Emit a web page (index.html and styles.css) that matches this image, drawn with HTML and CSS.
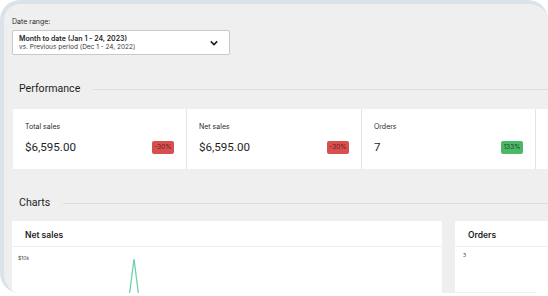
FILE: index.html
```html
<!DOCTYPE html>
<html>
<head>
<meta charset="utf-8">
<title>Analytics overview</title>
<link rel="stylesheet" href="styles.css">
</head>
<body>
<div class="frame">
	<div class="filters">
		<div class="filter-label">Date range:</div>
		<div class="select">
			<div class="select-text">
				<div class="select-title">Month to date (Jan 1 - 24, 2023)</div>
				<div class="select-sub">vs. Previous period (Dec 1 - 24, 2022)</div>
			</div>
			<svg class="chevron" width="10" height="10" viewBox="0 0 10 10"><path d="M1.8 3.4 L5 6.6 L8.2 3.4" fill="none" stroke="#1e1e1e" stroke-width="1.5"/></svg>
		</div>
	</div>

	<div class="section-title">
		<span>Performance</span>
		<div class="rule"></div>
	</div>

	<div class="stats">
		<div class="stat">
			<div class="stat-label">Total sales</div>
			<div class="stat-row">
				<span class="stat-value">$6,595.00</span>
				<span class="badge down">-30%</span>
			</div>
		</div>
		<div class="stat">
			<div class="stat-label">Net sales</div>
			<div class="stat-row">
				<span class="stat-value">$6,595.00</span>
				<span class="badge down">-30%</span>
			</div>
		</div>
		<div class="stat">
			<div class="stat-label">Orders</div>
			<div class="stat-row">
				<span class="stat-value">7</span>
				<span class="badge up">133%</span>
			</div>
		</div>
		<div class="stat"></div>
	</div>

	<div class="section-title charts-title">
		<span>Charts</span>
		<div class="rule"></div>
	</div>

	<div class="charts">
		<div class="chart wide">
			<div class="chart-head">Net sales</div>
			<div class="chart-body">
				<span class="axis">$10k</span>
				<svg class="plot" width="430" height="50" viewBox="0 0 430 50">
					<polyline points="117,48 122,9 127,48" fill="none" stroke="#6fd1a6" stroke-width="1.3"/>
				</svg>
			</div>
		</div>
		<div class="chart narrow">
			<div class="chart-head">Orders</div>
			<div class="chart-body">
				<span class="axis small">3</span>
				<div class="grid-line"></div>
			</div>
		</div>
	</div>
</div>
</body>
</html>
```

FILE: styles.css
```css
body{
	margin:0;
	background:#ffffff;
	font-family:Inter, "Noto Sans", sans-serif;
	color:#1e1e1e;
}
.frame{
	width:548px;
	height:293px;
	box-sizing:border-box;
	border-top:4px solid #dbe2ea;
	border-left:4px solid #dbe2ea;
	border-radius:20px 20px 0 20px;
	background:#efefef;
	overflow:hidden;
}

.filters{
	padding:13px 0 0 8px;
}
.filter-label{
	font-size:7px;
	line-height:10px;
	color:#2c2c2c;
}
.select{
	margin-top:3px;
	width:218px;
	height:25px;
	box-sizing:border-box;
	background:#fff;
	border:1px solid #c9c9c9;
	border-radius:2px;
	display:flex;
	align-items:center;
	padding:0 10px 0 6px;
}
.select-text{
	flex:1;
}
.select-title{
	font-size:7px;
	font-weight:600;
	line-height:9px;
}
.select-sub{
	font-size:6.5px;
	line-height:8px;
	color:#3a3a3a;
}

.section-title{
	display:flex;
	align-items:center;
	gap:13px;
	padding-left:15px;
	margin-top:26px;
	font-family:Roboto, sans-serif;
	font-size:10.6px;
	line-height:16px;
	color:#1e1e1e;
}
.rule{
	flex:1;
	height:1px;
	background:#dddddd;
}

.stats{
	display:grid;
	grid-template-columns:173px 174px 173px 174px;
	gap:1px;
	background:#e3e3e3;
	margin:12px 0 0 9px;
	width:max-content;
}
.stat{
	background:#fff;
	height:60px;
	box-sizing:border-box;
	padding:13px 12px 0 12px;
}
.stat-label{
	font-size:7px;
	line-height:10px;
	color:#2c2c2c;
}
.stat-row{
	display:flex;
	align-items:center;
	justify-content:space-between;
	margin-top:8px;
}
.stat-value{
	font-family:Roboto, sans-serif;
	font-size:11.6px;
	line-height:14px;
}
.badge{
	font-size:6.5px;
	line-height:13px;
	padding:0 1px;
	border-radius:2px;
	width:20px;
	text-align:center;
}
.down{
	background:#d65050;
	color:#7a1616;
}
.up{
	background:#4ab866;
	color:#184a26;
}

.charts-title{
	margin-top:26px;
}

.charts{
	display:flex;
	gap:13px;
	margin:10px 0 0 8px;
}
.chart{
	background:#fff;
	flex-shrink:0;
	height:80px;
}
.wide{
	width:430px;
}
.narrow{
	width:120px;
}
.chart-head{
	height:26px;
	box-sizing:border-box;
	padding:9px 0 0 13px;
	font-size:8.5px;
	font-weight:600;
	border-bottom:1px solid #efefef;
}
.chart-body{
	position:relative;
	height:53px;
}
.axis{
	position:absolute;
	left:6px;
	top:5px;
	font-size:5px;
	color:#444;
}
.small{
	left:8px;
}
.plot{
	display:block;
	margin-top:3px;
}
.grid-line{
	position:absolute;
	left:0;
	right:38px;
	top:45px;
	height:1px;
	background:#f0f0f0;
}
```
